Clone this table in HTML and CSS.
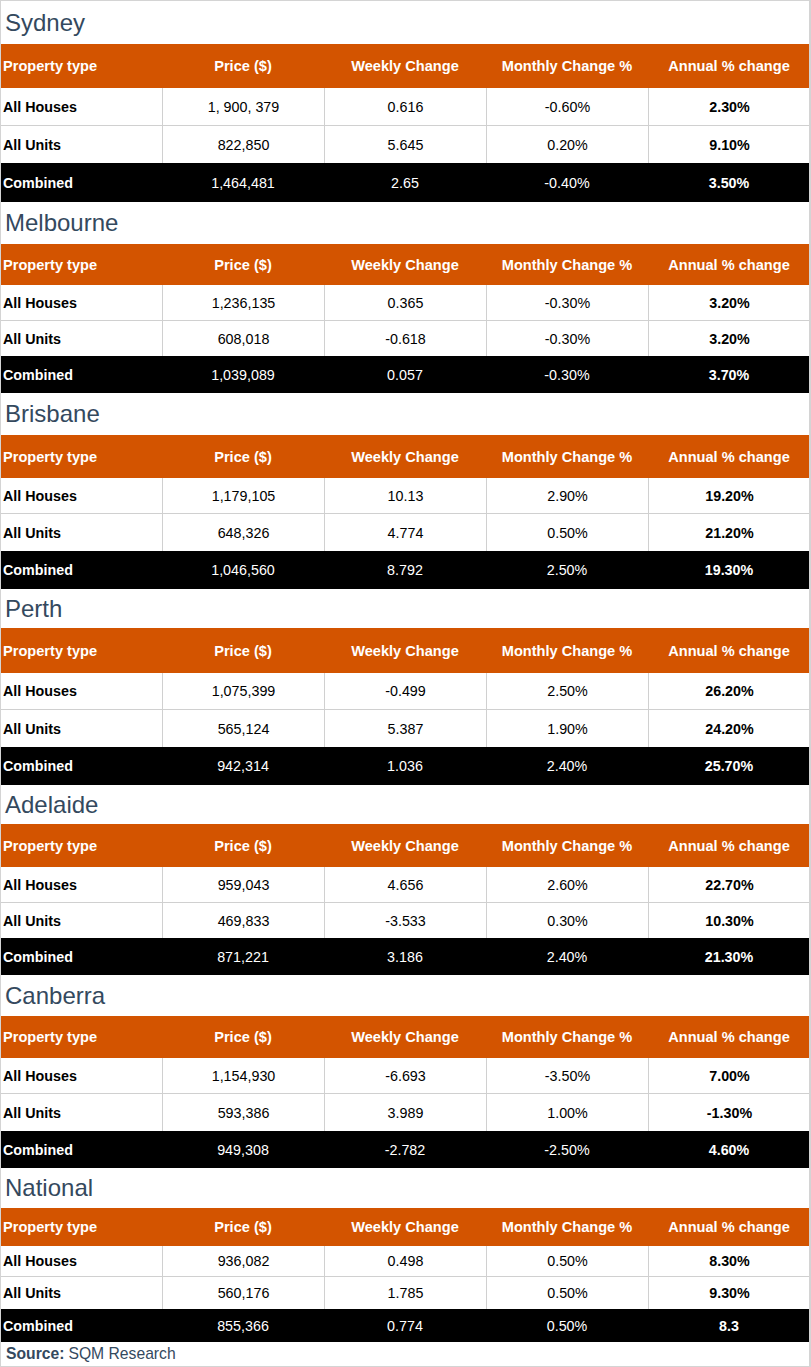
FILE: index.html
```html
<!DOCTYPE html>
<html lang="en">
<head>
<meta charset="utf-8">
<title>Property prices by city</title>
<link rel="stylesheet" href="styles.css">
</head>
<body>
<div class="page">

  <section class="city city-syd">
    <h2 class="city-title">Sydney</h2>
    <div class="row row-head"><div class="cell first">Property type</div><div class="cell">Price ($)</div><div class="cell">Weekly Change</div><div class="cell">Monthly Change %</div><div class="cell">Annual % change</div></div>
    <div class="row row-a"><div class="cell first">All Houses</div><div class="cell">1, 900, 379</div><div class="cell">0.616</div><div class="cell">-0.60%</div><div class="cell last">2.30%</div></div>
    <div class="row row-b"><div class="cell first">All Units</div><div class="cell">822,850</div><div class="cell">5.645</div><div class="cell">0.20%</div><div class="cell last">9.10%</div></div>
    <div class="row row-total"><div class="cell first">Combined</div><div class="cell">1,464,481</div><div class="cell">2.65</div><div class="cell">-0.40%</div><div class="cell last">3.50%</div></div>
  </section>

  <section class="city city-mel">
    <h2 class="city-title">Melbourne</h2>
    <div class="row row-head"><div class="cell first">Property type</div><div class="cell">Price ($)</div><div class="cell">Weekly Change</div><div class="cell">Monthly Change %</div><div class="cell">Annual % change</div></div>
    <div class="row row-a"><div class="cell first">All Houses</div><div class="cell">1,236,135</div><div class="cell">0.365</div><div class="cell">-0.30%</div><div class="cell last">3.20%</div></div>
    <div class="row row-b"><div class="cell first">All Units</div><div class="cell">608,018</div><div class="cell">-0.618</div><div class="cell">-0.30%</div><div class="cell last">3.20%</div></div>
    <div class="row row-total"><div class="cell first">Combined</div><div class="cell">1,039,089</div><div class="cell">0.057</div><div class="cell">-0.30%</div><div class="cell last">3.70%</div></div>
  </section>

  <section class="city city-bri">
    <h2 class="city-title">Brisbane</h2>
    <div class="row row-head"><div class="cell first">Property type</div><div class="cell">Price ($)</div><div class="cell">Weekly Change</div><div class="cell">Monthly Change %</div><div class="cell">Annual % change</div></div>
    <div class="row row-a"><div class="cell first">All Houses</div><div class="cell">1,179,105</div><div class="cell">10.13</div><div class="cell">2.90%</div><div class="cell last">19.20%</div></div>
    <div class="row row-b"><div class="cell first">All Units</div><div class="cell">648,326</div><div class="cell">4.774</div><div class="cell">0.50%</div><div class="cell last">21.20%</div></div>
    <div class="row row-total"><div class="cell first">Combined</div><div class="cell">1,046,560</div><div class="cell">8.792</div><div class="cell">2.50%</div><div class="cell last">19.30%</div></div>
  </section>

  <section class="city city-per">
    <h2 class="city-title">Perth</h2>
    <div class="row row-head"><div class="cell first">Property type</div><div class="cell">Price ($)</div><div class="cell">Weekly Change</div><div class="cell">Monthly Change %</div><div class="cell">Annual % change</div></div>
    <div class="row row-a"><div class="cell first">All Houses</div><div class="cell">1,075,399</div><div class="cell">-0.499</div><div class="cell">2.50%</div><div class="cell last">26.20%</div></div>
    <div class="row row-b"><div class="cell first">All Units</div><div class="cell">565,124</div><div class="cell">5.387</div><div class="cell">1.90%</div><div class="cell last">24.20%</div></div>
    <div class="row row-total"><div class="cell first">Combined</div><div class="cell">942,314</div><div class="cell">1.036</div><div class="cell">2.40%</div><div class="cell last">25.70%</div></div>
  </section>

  <section class="city city-ade">
    <h2 class="city-title">Adelaide</h2>
    <div class="row row-head"><div class="cell first">Property type</div><div class="cell">Price ($)</div><div class="cell">Weekly Change</div><div class="cell">Monthly Change %</div><div class="cell">Annual % change</div></div>
    <div class="row row-a"><div class="cell first">All Houses</div><div class="cell">959,043</div><div class="cell">4.656</div><div class="cell">2.60%</div><div class="cell last">22.70%</div></div>
    <div class="row row-b"><div class="cell first">All Units</div><div class="cell">469,833</div><div class="cell">-3.533</div><div class="cell">0.30%</div><div class="cell last">10.30%</div></div>
    <div class="row row-total"><div class="cell first">Combined</div><div class="cell">871,221</div><div class="cell">3.186</div><div class="cell">2.40%</div><div class="cell last">21.30%</div></div>
  </section>

  <section class="city city-can">
    <h2 class="city-title">Canberra</h2>
    <div class="row row-head"><div class="cell first">Property type</div><div class="cell">Price ($)</div><div class="cell">Weekly Change</div><div class="cell">Monthly Change %</div><div class="cell">Annual % change</div></div>
    <div class="row row-a"><div class="cell first">All Houses</div><div class="cell">1,154,930</div><div class="cell">-6.693</div><div class="cell">-3.50%</div><div class="cell last">7.00%</div></div>
    <div class="row row-b"><div class="cell first">All Units</div><div class="cell">593,386</div><div class="cell">3.989</div><div class="cell">1.00%</div><div class="cell last">-1.30%</div></div>
    <div class="row row-total"><div class="cell first">Combined</div><div class="cell">949,308</div><div class="cell">-2.782</div><div class="cell">-2.50%</div><div class="cell last">4.60%</div></div>
  </section>

  <section class="city city-nat">
    <h2 class="city-title">National</h2>
    <div class="row row-head"><div class="cell first">Property type</div><div class="cell">Price ($)</div><div class="cell">Weekly Change</div><div class="cell">Monthly Change %</div><div class="cell">Annual % change</div></div>
    <div class="row row-a"><div class="cell first">All Houses</div><div class="cell">936,082</div><div class="cell">0.498</div><div class="cell">0.50%</div><div class="cell last">8.30%</div></div>
    <div class="row row-b"><div class="cell first">All Units</div><div class="cell">560,176</div><div class="cell">1.785</div><div class="cell">0.50%</div><div class="cell last">9.30%</div></div>
    <div class="row row-total"><div class="cell first">Combined</div><div class="cell">855,366</div><div class="cell">0.774</div><div class="cell">0.50%</div><div class="cell last">8.3</div></div>
  </section>

  <p class="source"><strong>Source:</strong> SQM Research</p>
</div>
</body>
</html>
```

FILE: styles.css
```css
* { box-sizing: border-box; }

html, body {
  margin: 0;
  padding: 0;
  background: #ffffff;
}

body {
  font-family: "Liberation Sans", Arial, sans-serif;
  color: #000;
}

.page {
  width: 811px;
  border: 1px solid #d4d4d4;
  border-right-width: 2px;
  border-right-color: #d4d4d4;
}

.city {
  --t: 42px;
  --h: 42px;
  --r1: 36px;
  --r2: 36px;
  --c: 37px;
}

.city-syd { --t: 43px; --h: 44px; --r1: 38px; --r2: 37px; --c: 39px; }
.city-mel { --t: 42px; --h: 41px; --r1: 36px; --r2: 35px; --c: 37px; }
.city-bri { --t: 42px; --h: 43px; --r1: 36px; --r2: 37px; --c: 38px; }
.city-per { --t: 39px; --h: 45px; --r1: 37px; --r2: 37px; --c: 38px; }
.city-ade { --t: 39px; --h: 43px; --r1: 36px; --r2: 35px; --c: 37px; }
.city-can { --t: 41px; --h: 42px; --r1: 36px; --r2: 37px; --c: 37px; }
.city-nat { --t: 40px; --h: 38px; --r1: 31px; --r2: 32px; --c: 33px; }

.city-title {
  margin: 0;
  height: var(--t);
  display: flex;
  align-items: center;
  padding-left: 4px;
  font-size: 24px;
  font-weight: normal;
  color: #34495e;
}

.row {
  display: grid;
  grid-template-columns: 161px repeat(4, 162px);
  align-items: stretch;
}

.cell {
  display: flex;
  align-items: center;
  justify-content: center;
  font-size: 14.3px;
  white-space: nowrap;
}

.cell.first {
  justify-content: flex-start;
  padding-left: 2px;
  font-weight: bold;
}

.cell.last {
  font-weight: bold;
}

.row-head {
  height: var(--h);
  background: #d35400;
  color: #ffffff;
}

.row-head .cell {
  font-weight: bold;
  font-size: 14.6px;
}

.row-a {
  height: var(--r1);
  border-bottom: 1px solid #d0d0d0;
}

.row-b {
  height: var(--r2);
}

.row-a .cell + .cell,
.row-b .cell + .cell {
  border-left: 1px solid #d0d0d0;
}

.row-total {
  height: var(--c);
  background: #000000;
  color: #ffffff;
}

.source {
  margin: 0;
  height: 24px;
  display: flex;
  align-items: center;
  gap: 4px;
  padding-left: 5px;
  font-size: 15.7px;
  color: #34495e;
}

.source strong {
  font-weight: bold;
}
```
